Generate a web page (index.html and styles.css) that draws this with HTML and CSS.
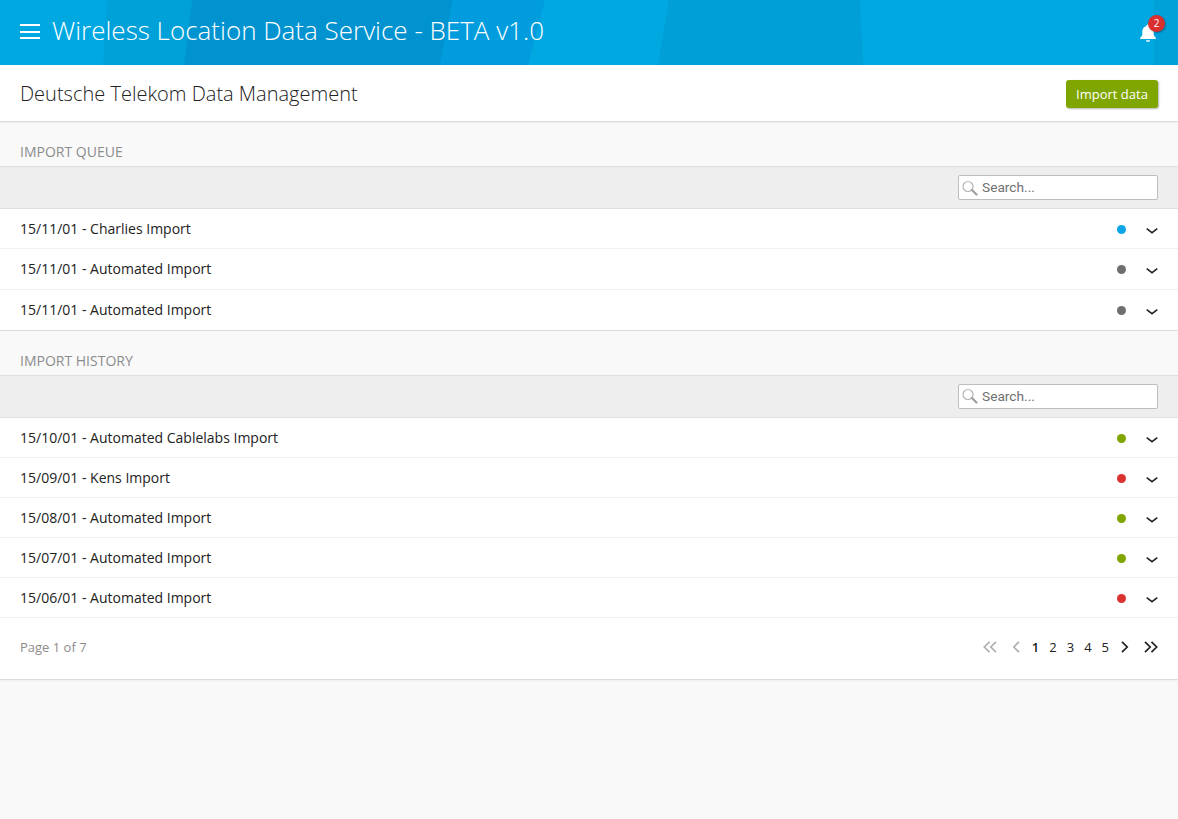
FILE: index.html
```html
<!DOCTYPE html>
<html lang="en">
  <head>
    <meta charset="UTF-8" />
    <meta name="viewport" content="width=device-width, initial-scale=1.0" />
    <title>Wireless Location Data Service</title>
    <link rel="stylesheet" href="styles.css">
  </head>
  <body>
    <header class="topo">
      <svg class="facetas" width="1178" height="65" viewBox="0 0 1178 65">
        <polygon points="107,0 103,65 184,65 192,0" fill="#00a0d8" />
        <polygon points="192,0 184,65 440,65 453,0" fill="#0093d0" />
        <polygon points="453,0 440,65 528,65 545,0" fill="#009cde" />
        <polygon points="669,0 658,65 863,65 860,0" fill="#009fd8" />
        <polygon points="1154,0 1154,65 1178,65 1178,0" fill="#00a0d9" />
      </svg>
      <div class="menu">
        <span></span>
        <span></span>
        <span></span>
      </div>
      <h1 class="tituloApp">Wireless Location Data Service - BETA v1.0</h1>
      <div class="sino">
        <svg width="20" height="20" viewBox="0 0 20 20">
          <path d="M10 1.5c-.9 0-1.5.6-1.5 1.4C5.800 3.600 4.300 5.800 4.300 8.500v3.600L2.200 15v1h15.600v-1l-2.100-2.900V8.500c0-2.700-1.500-4.900-4.200-5.600 0-.8-.6-1.400-1.500-1.400z" fill="#fff" />
          <path d="M8 17.200h4c0 1-.9 1.600-2 1.600s-2-.6-2-1.600z" fill="#fff" />
        </svg>
        <span class="badge">2</span>
      </div>
    </header>

    <div class="subtopo">
      <h2 class="tituloPagina">Deutsche Telekom Data Management</h2>
      <button class="botaoImport">Import data</button>
    </div>

    <section class="secao secaoFila">
      <h3 class="tituloSecao">IMPORT QUEUE</h3>
      <div class="barraBusca">
        <label class="busca">
          <svg width="16" height="16" viewBox="0 0 16 16">
            <circle cx="6" cy="6.500" r="5" fill="none" stroke="#b5b5b5" stroke-width="1.200" />
            <path d="M10 10l4.500 4.500" stroke="#a0a0a0" stroke-width="2.200" stroke-linecap="round" />
          </svg>
          <input type="text" placeholder="Search...">
        </label>
      </div>
      <ul class="lista">
        <li class="linha"><span>15/11/01 - Charlies Import</span><i class="ponto azul"></i><svg class="seta" width="12" height="6" viewBox="0 0 12 6"><path d="M.7.700 6 4.700 11.300.700" fill="none" stroke="#222" stroke-width="1.500" /></svg></li>
        <li class="linha"><span>15/11/01 - Automated Import</span><i class="ponto cinza"></i><svg class="seta" width="12" height="6" viewBox="0 0 12 6"><path d="M.7.700 6 4.700 11.300.700" fill="none" stroke="#222" stroke-width="1.500" /></svg></li>
        <li class="linha"><span>15/11/01 - Automated Import</span><i class="ponto cinza"></i><svg class="seta" width="12" height="6" viewBox="0 0 12 6"><path d="M.7.700 6 4.700 11.300.700" fill="none" stroke="#222" stroke-width="1.500" /></svg></li>
      </ul>
    </section>

    <section class="secao secaoHistorico">
      <h3 class="tituloSecao">IMPORT HISTORY</h3>
      <div class="barraBusca">
        <label class="busca">
          <svg width="16" height="16" viewBox="0 0 16 16">
            <circle cx="6" cy="6.500" r="5" fill="none" stroke="#b5b5b5" stroke-width="1.200" />
            <path d="M10 10l4.500 4.500" stroke="#a0a0a0" stroke-width="2.200" stroke-linecap="round" />
          </svg>
          <input type="text" placeholder="Search...">
        </label>
      </div>
      <ul class="lista">
        <li class="linha"><span>15/10/01 - Automated Cablelabs Import</span><i class="ponto verde"></i><svg class="seta" width="12" height="6" viewBox="0 0 12 6"><path d="M.7.700 6 4.700 11.300.700" fill="none" stroke="#222" stroke-width="1.500" /></svg></li>
        <li class="linha"><span>15/09/01 - Kens Import</span><i class="ponto vermelho"></i><svg class="seta" width="12" height="6" viewBox="0 0 12 6"><path d="M.7.700 6 4.700 11.300.700" fill="none" stroke="#222" stroke-width="1.500" /></svg></li>
        <li class="linha"><span>15/08/01 - Automated Import</span><i class="ponto verde"></i><svg class="seta" width="12" height="6" viewBox="0 0 12 6"><path d="M.7.700 6 4.700 11.300.700" fill="none" stroke="#222" stroke-width="1.500" /></svg></li>
        <li class="linha"><span>15/07/01 - Automated Import</span><i class="ponto verde"></i><svg class="seta" width="12" height="6" viewBox="0 0 12 6"><path d="M.7.700 6 4.700 11.300.700" fill="none" stroke="#222" stroke-width="1.500" /></svg></li>
        <li class="linha"><span>15/06/01 - Automated Import</span><i class="ponto vermelho"></i><svg class="seta" width="12" height="6" viewBox="0 0 12 6"><path d="M.7.700 6 4.700 11.300.700" fill="none" stroke="#222" stroke-width="1.500" /></svg></li>
      </ul>
      <div class="paginacao">
        <span class="infoPagina">Page 1 of 7</span>
        <nav class="paginas">
          <svg width="14" height="12" viewBox="0 0 14 12"><path d="M6.500.800 1.300 6l5.200 5.200M13 .800 7.800 6l5.200 5.200" fill="none" stroke="#b0b0b0" stroke-width="1.700" /></svg>
          <svg class="pgAnterior" width="8" height="12" viewBox="0 0 8 12"><path d="M7 .800 1.800 6 7 11.200" fill="none" stroke="#b0b0b0" stroke-width="1.700" /></svg>
          <a class="atual">1</a>
          <a>2</a>
          <a>3</a>
          <a>4</a>
          <a>5</a>
          <svg class="pgProxima" width="8" height="12" viewBox="0 0 8 12"><path d="M1 .800 6.200 6 1 11.200" fill="none" stroke="#222" stroke-width="1.700" /></svg>
          <svg width="14" height="12" viewBox="0 0 14 12"><path d="M1 .800 6.200 6 1 11.200M7.500 .800 12.700 6l-5.200 5.200" fill="none" stroke="#222" stroke-width="1.700" /></svg>
        </nav>
      </div>
    </section>
  </body>
</html>
```

FILE: styles.css
```css
* {
  box-sizing: border-box;
}
body {
  margin: 0;
  min-height: 819px;
  background-color: #f9f9f9;
  font-family: "Open Sans", sans-serif;
  color: #222;
}
.topo {
  position: relative;
  display: flex;
  align-items: center;
  height: 65px;
  padding: 0 20px 2px;
  background-color: #00a8e2;
  overflow: hidden;
}
.facetas {
  position: absolute;
  left: 0;
  top: 0;
}
.menu {
  position: relative;
  display: flex;
  flex-direction: column;
  gap: 4.500px;
  width: 20px;
}
.menu span {
  height: 2px;
  background-color: white;
}
.tituloApp {
  position: relative;
  margin: 0 0 4px 12px;
  font-size: 26px;
  font-weight: 300;
  color: white;
  white-space: nowrap;
}
.sino {
  position: relative;
  display: flex;
  margin: 2px 0 0 auto;
}
.badge {
  position: absolute;
  top: -8px;
  left: 10px;
  width: 17px;
  height: 17px;
  border-radius: 50%;
  background-color: #d9302f;
  box-shadow: 1px 1px 2px rgba(0, 0, 0, 0.3);
  color: white;
  font-size: 10px;
  line-height: 17px;
  text-align: center;
}
.subtopo {
  display: flex;
  align-items: center;
  justify-content: space-between;
  height: 57px;
  padding: 0 20px;
  background-color: white;
  border-bottom: 1px solid #dcdcdc;
  box-shadow: 0 1px 2px rgba(0, 0, 0, 0.05);
}
.tituloPagina {
  margin: 0;
  font-size: 20px;
  font-weight: 300;
}
.botaoImport {
  width: 92px;
  height: 28px;
  margin-top: 2px;
  padding: 0;
  border: 0;
  border-radius: 3px;
  background-color: #7fa500;
  box-shadow: 1px 1px 2px rgba(0, 0, 0, 0.3);
  color: white;
  font-family: "Open Sans", sans-serif;
  font-size: 13px;
}
.tituloSecao {
  margin: 0;
  height: 44px;
  padding: 21px 20px 0;
  font-size: 14px;
  font-weight: 400;
  line-height: 18px;
  color: #8c8c8c;
}
.barraBusca {
  display: flex;
  justify-content: flex-end;
  height: 43px;
  padding: 8px 20px 0;
  background-color: #eeeeee;
  border-top: 1px solid #dfdfdf;
  border-bottom: 1px solid #dfdfdf;
}
.busca {
  display: flex;
  align-items: center;
  gap: 4px;
  width: 200px;
  height: 25px;
  padding-left: 3px;
  background-color: white;
  border: 1px solid #bdbdbd;
  border-radius: 2px;
}
.busca input {
  flex: 1;
  min-width: 0;
  padding: 0;
  border: 0;
  outline: 0;
  font-family: Roboto, sans-serif;
  font-size: 13.700px;
  color: #666;
}
.secaoFila .busca input {
  margin-bottom: 1px;
}
.busca input::placeholder {
  color: #6f6f6f;
  opacity: 1;
}
.lista {
  margin: 0;
  padding: 0;
  list-style: none;
  background-color: white;
}
.secaoFila .lista {
  border-bottom: 1px solid #dcdcdc;
}
.linha {
  display: flex;
  align-items: center;
  height: 40px;
  padding: 0 20px;
  border-bottom: 1px solid #f0f0f0;
  font-size: 14px;
}
.secaoFila .linha {
  height: 40.330px;
}
.secaoFila .linha:last-child {
  border-bottom: 0;
}
.linha span {
  flex: 1;
}
.ponto {
  width: 9px;
  height: 9px;
  margin: 2px 20px 0 0;
  border-radius: 50%;
}
.azul {
  background-color: #0ea5e6;
}
.cinza {
  background-color: #6e6e6e;
}
.verde {
  background-color: #7fa500;
}
.vermelho {
  background-color: #db3330;
}
.seta {
  margin-top: 4px;
}
.secaoHistorico .seta {
  margin-top: 6px;
}
.paginacao {
  display: flex;
  align-items: center;
  justify-content: space-between;
  height: 62px;
  padding: 0 20px 2px;
  background-color: white;
  border-bottom: 1px solid #dcdcdc;
  box-shadow: 0 1px 2px rgba(0, 0, 0, 0.05);
}
.infoPagina {
  font-size: 13px;
  color: #8c8c8c;
}
.paginas {
  display: flex;
  align-items: center;
  gap: 10px;
  font-size: 13px;
}
.paginas .atual {
  font-weight: 600;
}
.pgAnterior {
  margin: 0 2px 0 5px;
}
.pgProxima {
  margin: 0 5px 0 2px;
}
```
